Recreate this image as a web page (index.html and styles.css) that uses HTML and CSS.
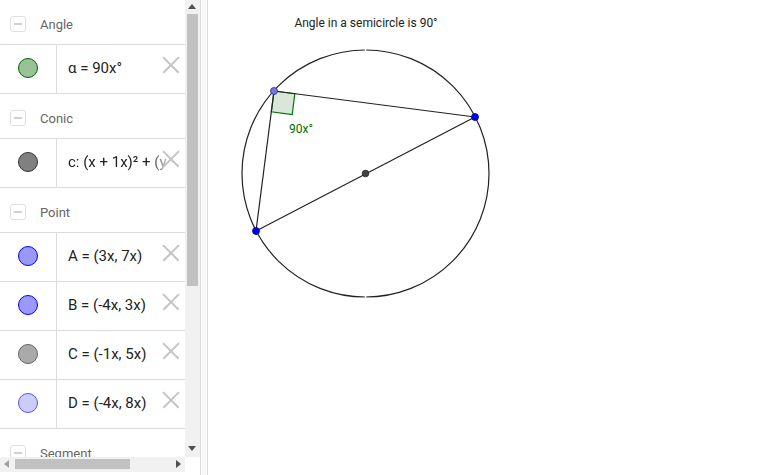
FILE: index.html
```html
<!DOCTYPE html>
<html lang="en">
<head>
  <meta charset="UTF-8">
  <title>Angle in a semicircle</title>
  <link rel="stylesheet" href="styles.css">
</head>
<body>
  <div class="app">
    <div class="algebra">
      <div class="av-view">
        <div class="av-list">
          <div class="group-head"><span class="toggle"></span><span class="group-name">Angle</span></div>
          <div class="item">
            <div class="marble"><span class="dot dot-angle"></span></div>
            <div class="formula">α = 90x°</div>
            <span class="remove"></span>
          </div>

          <div class="group-head"><span class="toggle"></span><span class="group-name">Conic</span></div>
          <div class="item">
            <div class="marble"><span class="dot dot-conic"></span></div>
            <div class="formula formula-long">c: (x + 1x)² + (y − 5x)² = 13x²</div>
            <span class="remove"></span>
          </div>

          <div class="group-head"><span class="toggle"></span><span class="group-name">Point</span></div>
          <div class="item">
            <div class="marble"><span class="dot dot-a"></span></div>
            <div class="formula">A = (3x, 7x)</div>
            <span class="remove"></span>
          </div>
          <div class="item">
            <div class="marble"><span class="dot dot-b"></span></div>
            <div class="formula">B = (-4x, 3x)</div>
            <span class="remove"></span>
          </div>
          <div class="item">
            <div class="marble"><span class="dot dot-c"></span></div>
            <div class="formula">C = (-1x, 5x)</div>
            <span class="remove"></span>
          </div>
          <div class="item">
            <div class="marble"><span class="dot dot-d"></span></div>
            <div class="formula">D = (-4x, 8x)</div>
            <span class="remove"></span>
          </div>

          <div class="group-head"><span class="toggle"></span><span class="group-name">Segment</span></div>
        </div>
        <div class="vscroll">
          <span class="arrow arrow-up"></span>
          <div class="vthumb"></div>
          <span class="arrow arrow-down"></span>
        </div>
      </div>
      <div class="hscroll">
        <span class="arrow arrow-left"></span>
        <div class="hthumb"></div>
        <span class="arrow arrow-right"></span>
      </div>
    </div>

    <div class="splitter"></div>

    <div class="graphics">
      <svg width="574" height="475" viewBox="208 0 574 475">
        <text x="366" y="27" text-anchor="middle" class="caption">Angle in a semicircle is 90°</text>
        <polygon points="274,91 294.8,93.7 292.2,114.5 271.3,111.8" fill="#d9e7d9" stroke="#007500" stroke-width="1.2"/>
        <circle cx="365.5" cy="173.5" r="123.5" fill="none" stroke="#222" stroke-width="1.2"/>
        <line x1="365.5" y1="48" x2="365.5" y2="52" stroke="#fff" stroke-width="1.5"/>
        <line x1="365.5" y1="295" x2="365.5" y2="299" stroke="#fff" stroke-width="1.5"/>
        <line x1="274" y1="91" x2="475" y2="117" stroke="#222" stroke-width="1.2"/>
        <line x1="274" y1="91" x2="256" y2="231" stroke="#222" stroke-width="1.2"/>
        <line x1="475" y1="117" x2="256" y2="231" stroke="#222" stroke-width="1.2"/>
        <text x="289" y="133" class="angle-label">90x°</text>
        <circle cx="365.5" cy="173.5" r="3.3" fill="#444" stroke="#222" stroke-width="0.8"/>
        <circle cx="274" cy="91" r="3.5" fill="#7474ec" stroke="#2a2a80" stroke-width="0.8"/>
        <circle cx="475" cy="117" r="3.5" fill="#0000ff" stroke="#00008a" stroke-width="0.8"/>
        <circle cx="256" cy="231" r="3.5" fill="#0000ff" stroke="#00008a" stroke-width="0.8"/>
      </svg>
    </div>
  </div>
</body>
</html>
```

FILE: styles.css
```css
body {
  margin: 0;
  font-family: Roboto, "Liberation Sans", sans-serif;
  background: white;
  color: #333;
}

.app {
  display: flex;
  width: 782px;
  height: 475px;
  overflow: hidden;
}

/* algebra view */

.algebra {
  width: 200px;
  display: flex;
  flex-direction: column;
}

.av-view {
  display: flex;
  height: 457px;
}

.av-list {
  width: 185px;
  overflow: hidden;
}

.group-head {
  height: 45px;
  padding-top: 4px;
  box-sizing: border-box;
  border-bottom: 1px solid #dcdcdc;
  display: flex;
  align-items: center;
}

.toggle {
  position: relative;
  width: 14px;
  height: 14px;
  margin-left: 10px;
  border: 1px solid #e0e0e0;
  border-radius: 3px;
}

.toggle::after {
  content: "";
  position: absolute;
  left: 3px;
  top: 6px;
  width: 8px;
  height: 2px;
  background: #d0d0d0;
}

.group-name {
  margin-left: 14px;
  font-size: 13px;
  color: #666;
}

.item {
  position: relative;
  height: 48px;
  border-bottom: 1px solid #dcdcdc;
  display: flex;
  align-items: center;
}

.marble {
  width: 56px;
  height: 100%;
  border-right: 1px solid #dcdcdc;
  display: flex;
  align-items: center;
  justify-content: center;
  flex-shrink: 0;
}

.dot {
  width: 18px;
  height: 18px;
  border-radius: 50%;
  border: 1px solid;
  margin-top: -3px;
}

.dot-angle { background: #99c299; border-color: #006400; }
.dot-conic { background: #808080; border-color: #333; }
.dot-a { background: #9999ff; border-color: #0000ff; }
.dot-b { background: #9999ff; border-color: #0000ff; }
.dot-c { background: #aaaaaa; border-color: #666; }
.dot-d { background: #ccccff; border-color: #5555ee; }

.formula {
  margin-left: 11px;
  margin-top: -3px;
  font-size: 15px;
  color: #222;
  white-space: nowrap;
}

.formula-long {
  width: 110px;
  overflow: hidden;
  -webkit-mask-image: linear-gradient(to right, #000 80px, transparent 108px);
  mask-image: linear-gradient(to right, #000 80px, transparent 108px);
}

.remove {
  position: absolute;
  left: 163px;
  top: 12px;
  width: 16px;
  height: 16px;
}

.remove::before,
.remove::after {
  content: "";
  position: absolute;
  left: -3px;
  top: 7px;
  width: 22px;
  height: 1.5px;
  background: #c4c4c4;
  transform: rotate(45deg);
}

.remove::after {
  transform: rotate(-45deg);
}

/* fake scrollbars */

.vscroll {
  width: 15px;
  background: #f1f1f1;
  position: relative;
}

.vthumb {
  margin: 14px 0 0 2px;
  width: 11px;
  height: 272px;
  background: #c1c1c1;
}

.hscroll {
  width: 185px;
  height: 15px;
  background: #f1f1f1;
  position: relative;
}

.hthumb {
  margin: 2px 0 0 15px;
  width: 115px;
  height: 10px;
  background: #c1c1c1;
}

.arrow {
  position: absolute;
  width: 0;
  height: 0;
  border: 4px solid transparent;
}

.arrow-up {
  left: 3px;
  top: 1px;
  border-width: 0 4px 5px;
  border-bottom-color: #505050;
  margin-top: 3px;
}

.arrow-down {
  left: 3px;
  top: 446px;
  border-width: 5px 4px 0;
  border-top-color: #505050;
}

.arrow-left {
  left: 4px;
  top: 3px;
  border-width: 4px 5px 4px 0;
  border-right-color: #a0a0a0;
}

.arrow-right {
  left: 176px;
  top: 3px;
  border-width: 4px 0 4px 5px;
  border-left-color: #505050;
}

.splitter {
  width: 6px;
  background: #f8f8f8;
  border-left: 1px solid #dcdcdc;
  border-right: 1px solid #dcdcdc;
}

/* graphics view */

.graphics {
  flex: 1;
  background: white;
}

.graphics svg {
  display: block;
}

.caption {
  font-family: Roboto, "Liberation Sans", sans-serif;
  font-size: 12px;
  fill: #222;
}

.angle-label {
  font-family: Roboto, "Liberation Sans", sans-serif;
  font-size: 12px;
  fill: #006e00;
}
```
